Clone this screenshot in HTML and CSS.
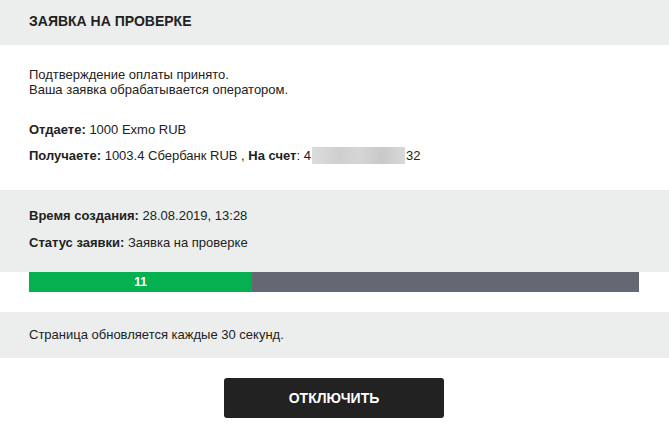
FILE: index.html
```html
<!DOCTYPE html>
<html lang="ru">
<head>
  <meta charset="UTF-8">
  <title>Заявка на проверке</title>
  <link rel="stylesheet" href="styles.css">
</head>
<body>
  <div class="order">
    <div class="order-head">Заявка на проверке</div>

    <div class="order-body">
      <p class="note">Подтверждение оплаты принято.<br>Ваша заявка обрабатывается оператором.</p>
      <p class="row"><b>Отдаете:</b> 1000 Exmo RUB</p>
      <p class="row"><b>Получаете:</b> 1003.4 Сбербанк RUB , <b>На счет</b>: 4<span class="masked"></span>32</p>
    </div>

    <div class="order-info">
      <p class="row"><b>Время создания:</b> 28.08.2019, 13:28</p>
      <p class="row"><b>Статус заявки:</b> Заявка на проверке</p>
    </div>

    <div class="timer">
      <div class="timer-fill" style="width: 36.6%">11</div>
    </div>

    <div class="order-refresh">Страница обновляется каждые 30 секунд.</div>

    <div class="actions">
      <button class="btn-off">Отключить</button>
    </div>
  </div>
</body>
</html>
```

FILE: styles.css
```css
:root {
  --panel: #ebeeed;
  --text: #222222;
  --green: #05b050;
  --slate: #646873;
}

body {
  margin: 0;
  font-family: "Liberation Sans", Arial, sans-serif;
  font-size: 13px;
  color: var(--text);
  background: #ffffff;
}

p {
  margin: 0;
}

.order-head {
  height: 45px;
  box-sizing: border-box;
  padding: 13px 29px 0;
  background: var(--panel);
  font-size: 14px;
  font-weight: bold;
  text-transform: uppercase;
}

.order-body {
  height: 145px;
  box-sizing: border-box;
  padding: 22px 29px 0;
}

.note {
  line-height: 15px;
  margin-bottom: 24px;
}

.row {
  line-height: 18px;
  margin-bottom: 8px;
}

.masked {
  display: inline-block;
  vertical-align: -4px;
  width: 93px;
  height: 17px;
  margin: 0 1px;
  background: linear-gradient(90deg, #dcdcdc, #cfcfcf 30%, #d6d6d6 50%, #c9c9c9 75%, #d8d8d8);
}

.order-info {
  height: 82px;
  box-sizing: border-box;
  padding: 17px 29px 0;
  background: var(--panel);
}

.order-info .row {
  margin-bottom: 9px;
}

.timer {
  display: flex;
  height: 20px;
  margin: 0 30px 0 29px;
  background: var(--slate);
}

.timer-fill {
  background: var(--green);
  color: #ffffff;
  font-weight: bold;
  font-size: 12px;
  line-height: 20px;
  text-align: center;
}

.order-refresh {
  margin-top: 20px;
  height: 46px;
  box-sizing: border-box;
  padding: 15px 29px 0;
  background: var(--panel);
}

.actions {
  display: flex;
  justify-content: center;
  padding-top: 20px;
}

.btn-off {
  width: 220px;
  height: 40px;
  margin-right: 1px;
  border: none;
  border-radius: 3px;
  background: #222222;
  color: #ffffff;
  font-family: "Liberation Sans", Arial, sans-serif;
  font-size: 14px;
  font-weight: bold;
  text-transform: uppercase;
  cursor: pointer;
}
```
